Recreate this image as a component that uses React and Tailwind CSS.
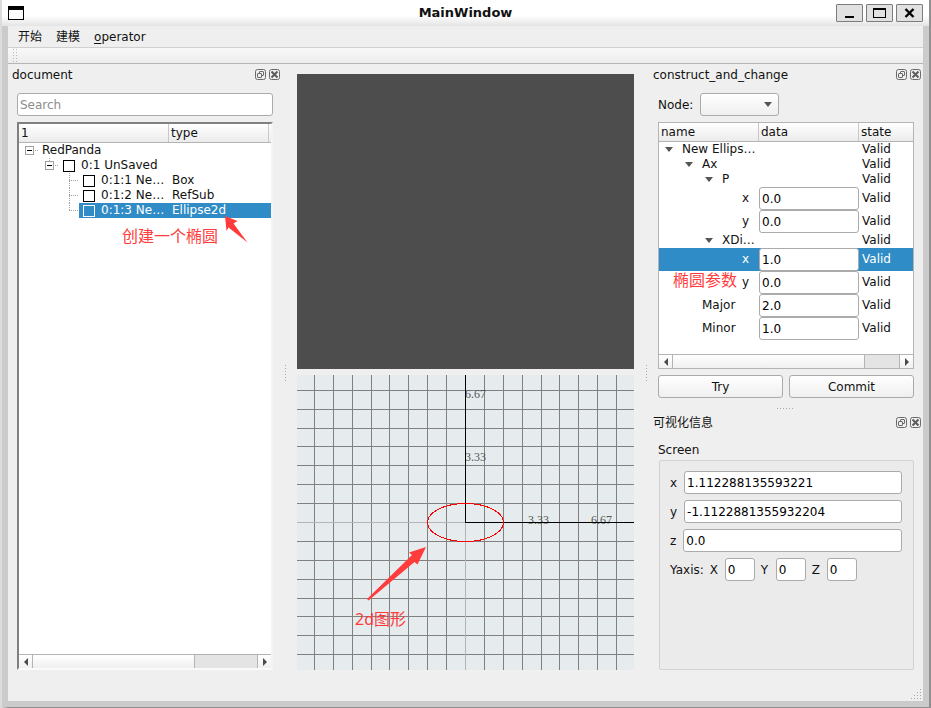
import React, { useState } from "react";

function Stipple({ vertical, className }) {
  return (
    <svg
      className={"shrink-0 " + (className || "")}
      width={vertical ? 2 : 17}
      height={vertical ? 17 : 2}
      shapeRendering="crispEdges"
      aria-hidden="true"
    >
      {[0, 3, 6, 9, 12, 15].map((p) => (
        <rect key={p} x={vertical ? 0 : p} y={vertical ? p : 0} width="1" height="1" fill="#a8a8a8" />
      ))}
    </svg>
  );
}

function DockTitle({ children }) {
  return (
    <div className="flex h-[21px] shrink-0 items-center gap-[3px] pl-1">
      <h2 className="flex-1">{children}</h2>
      <button type="button" aria-label="Float" className="size-[11px]">
        <svg width="11" height="11" viewBox="0 0 11 11" fill="none" stroke="#6a6a68">
          <rect x="0.5" y="0.5" width="10" height="10" rx="2" />
          <rect x="4.5" y="2.5" width="4" height="4" rx="0.5" />
          <rect x="2.5" y="4.5" width="4" height="4" rx="0.5" fill="#efefef" />
        </svg>
      </button>
      <button type="button" aria-label="Close" className="size-[11px]">
        <svg width="11" height="11" viewBox="0 0 11 11" fill="none" stroke="#6a6a68">
          <rect x="0.5" y="0.5" width="10" height="10" rx="2" />
          <path d="M2.500 2.500l6 6M8.500 2.500l-6 6" strokeWidth="2" stroke="#5c5c5a" />
        </svg>
      </button>
    </div>
  );
}

function ScrollBar({ thumb }) {
  return (
    <div className="flex h-[14px] shrink-0 border-t border-[#b4b4b4] bg-[#e4e4e4]">
      <button type="button" aria-label="Scroll left" className="flex w-[14px] items-center justify-center border-r border-[#b4b4b4] bg-linear-to-b from-white to-[#f0f0f0]">
        <svg width="4" height="8"><path d="M4 0v8L0 4z" fill="#4a4a4a" /></svg>
      </button>
      <div className={thumb + " border-r border-[#b4b4b4] bg-linear-to-b from-white to-[#f0f0f0]"} />
      <div className="flex-1" />
      <button type="button" aria-label="Scroll right" className="flex w-[14px] items-center justify-center border-l border-[#b4b4b4] bg-linear-to-b from-white to-[#f0f0f0]">
        <svg width="4" height="8"><path d="M0 0v8L4 4z" fill="#4a4a4a" /></svg>
      </button>
    </div>
  );
}

function HeaderCell({ children, divider }) {
  return (
    <th className="p-0 text-left font-normal">
      <div className="h-[19px] border-b border-[#b4b4b4] bg-linear-to-b from-white to-[#ebebeb]">
        <div className={"h-[18px] pl-[2px] leading-[18px] " + (divider || "")}>{children}</div>
      </div>
    </th>
  );
}

function Field({ id, label, initial, className }) {
  const [value, setValue] = useState(initial);
  return (
    <input
      id={id}
      aria-label={label}
      value={value}
      onChange={(e) => setValue(e.target.value)}
      className={"h-[23px] min-w-0 rounded-[3px] border border-[#ababab] bg-white px-[2px] text-black outline-none " + className}
    />
  );
}

function Expander({ stub }) {
  return (
    <svg className="shrink-0" width="16" height="15" shapeRendering="crispEdges" aria-hidden="true">
      {stub && <path d="M4.5 0v4" stroke="#a0a0a0" strokeDasharray="1 1" />}
      <rect x="0.5" y="3.5" width="8" height="8" fill="#fff" stroke="#a0a0a0" />
      <path d="M2 7.5h5" stroke="#000" />
      <path d="M10 7.5h4" stroke="#a0a0a0" strokeDasharray="1 1" />
    </svg>
  );
}

function Branch({ last }) {
  return (
    <svg className="shrink-0" width="10" height="15" shapeRendering="crispEdges" aria-hidden="true">
      <path d={last ? "M0.5 0v8M0 7.5h10" : "M0.5 0v15M0 7.5h10"} fill="none" stroke="#a0a0a0" strokeDasharray="1 1" />
    </svg>
  );
}

function Tick({ label, light }) {
  return (
    <input
      type="checkbox"
      aria-label={label}
      className={"size-3 shrink-0 appearance-none border " + (light ? "border-white" : "border-black")}
    />
  );
}

const CHILDREN = [
  { name: "0:1:1 Ne…", type: "Box" },
  { name: "0:1:2 Ne…", type: "RefSub" },
  { name: "0:1:3 Ne…", type: "Ellipse2d", selected: true },
];

function DocumentDock() {
  return (
    <section className="relative flex w-[277px] shrink-0 flex-col pr-[5px]">
      <DockTitle>document</DockTitle>
      <div className="flex flex-1 flex-col gap-[6px] pt-2 pr-[7px] pb-[31px] pl-[9px]">
        <input
          type="search"
          aria-label="Search"
          placeholder="Search"
          className="h-[23px] w-full rounded-[3px] border border-[#ababab] bg-white px-[2px] outline-none placeholder:text-[#8c8c8c]"
        />
        <div className="flex flex-1 flex-col border-2 border-t-[#808080] border-r-[#f4f4f4] border-b-[#fafafa] border-l-[#808080] bg-white">
          <table className="w-full table-fixed border-separate border-spacing-0">
            <colgroup>
              <col className="w-[150px]" />
              <col />
            </colgroup>
            <thead>
              <tr>
                <HeaderCell divider="border-r border-[#c8c8c8]">1</HeaderCell>
                <HeaderCell divider="mr-[2px] border-r border-[#c8c8c8]">type</HeaderCell>
              </tr>
            </thead>
            <tbody className="leading-[15px]">
              <tr>
                <td className="p-0"><div className="flex h-[15px] pl-[6px]"><Expander /><span className="pl-px">RedPanda</span></div></td>
                <td className="p-0" />
              </tr>
              <tr>
                <td className="p-0">
                  <div className="flex h-[15px] items-center pl-[26px]">
                    <Expander stub />
                    <span className="flex items-center gap-[6px] pl-[2px]"><Tick label="0:1 UnSaved" />0:1 UnSaved</span>
                  </div>
                </td>
                <td className="p-0" />
              </tr>
              {CHILDREN.map((c, i) => (
                <tr key={c.name}>
                  <td className="p-0">
                    <div className="flex h-[15px] pl-[50px]">
                      <Branch last={i === 2} />
                      <span className={"flex flex-1 items-center gap-[6px] pl-1 " + (c.selected ? "bg-[#308cc6] text-white" : "")}>
                        <Tick label={c.name} light={c.selected} />
                        {c.name}
                      </span>
                    </div>
                  </td>
                  <td className={"p-0 pl-[3px] " + (c.selected ? "bg-[#308cc6] text-white" : "")}>{c.type}</td>
                </tr>
              ))}
            </tbody>
          </table>
          <div className="flex-1" />
          <ScrollBar thumb="w-[162px]" />
        </div>
      </div>
      <div className="pointer-events-none absolute top-[152px] left-[114px] text-base text-[#ff3b3b]">
        <span className="block leading-[42px]">创建一个椭圆</span>
        <svg className="absolute top-0 left-[103px]" width="24" height="28" aria-hidden="true">
          <path d="M0 0l12.500 5-4 2.500L22.500 26.500 3.500 11.500 1.500 15z" fill="#ff3b3b" />
        </svg>
      </div>
    </section>
  );
}

const GRID_X = [17, 36, 55, 74, 92, 111, 130, 149, 187, 206, 225, 244, 262, 281, 300, 319];
const GRID_Y = [15, 34, 53, 71, 90, 109, 128, 166, 185, 204, 223, 241, 260, 279];

function Views() {
  return (
    <main className="flex min-w-0 flex-1 items-center pb-[18px]">
      <Stipple vertical />
      <div className="flex min-w-0 flex-1 flex-col gap-[6px] self-stretch pt-[10px] pr-3 pb-[13px] pl-[10px]">
        <div className="flex-1 bg-[#4d4d4d]" />
        <svg className="w-full flex-1 bg-[#e6ecee]" viewBox="0 0 337 295" preserveAspectRatio="xMidYMid slice" role="img" aria-label="2D view">
          <rect width="337" height="295" fill="#e6ecee" />
          <g shapeRendering="crispEdges" fill="#808080">
            {GRID_X.map((x) => <rect key={x} x={x} width="1" height="295" />)}
            {GRID_Y.map((y) => <rect key={y} y={y} width="337" height="1" />)}
            <rect y="147" width="168" height="1" fill="#b4b4b4" />
            <rect x="168" y="147" width="1" height="148" fill="#b4b4b4" />
          </g>
          <g fontFamily="'Liberation Serif', serif" fontSize="12" fill="#555">
            <text x="168" y="23">6.67</text>
            <text x="168" y="86">3.33</text>
            <text x="231" y="149">3.33</text>
            <text x="294" y="149">6.67</text>
          </g>
          <g shapeRendering="crispEdges">
            <rect x="168" width="1" height="148" fill="#000" />
            <rect x="168" y="147" width="169" height="1" fill="#000" />
            <ellipse cx="168.500" cy="147.500" rx="38" ry="19" fill="none" stroke="#f00" />
          </g>
          <path d="M129 172l-17 5.500 3 2.500-45 44 1.500 1.500 46-38.500 3 2.500z" fill="#ff3b3b" />
          <text x="58" y="250" fontSize="16" fill="#ff3b3b" fontFamily="'Noto Sans', 'Noto Sans CJK SC', sans-serif">2d图形</text>
        </svg>
      </div>
      <Stipple vertical className="mr-px" />
    </main>
  );
}

const PROPERTIES = [
  { name: "New Ellips…", indent: "pl-[6px]", open: true },
  { name: "Ax", indent: "pl-[26px]", open: true },
  { name: "P", indent: "pl-[46px]", open: true },
  { name: "x", indent: "pl-[83px]", value: "0.0" },
  { name: "y", indent: "pl-[83px]", value: "0.0" },
  { name: "XDi…", indent: "pl-[46px]", open: true },
  { name: "x", indent: "pl-[83px]", value: "1.0", selected: true },
  { name: "y", indent: "pl-[83px]", value: "0.0" },
  { name: "Major", indent: "pl-[43px]", value: "2.0" },
  { name: "Minor", indent: "pl-[43px]", value: "1.0" },
];

function ConstructDock() {
  return (
    <section className="relative flex flex-col">
      <DockTitle>construct_and_change</DockTitle>
      <div className="flex flex-col gap-[6px] pt-2 pr-[7px] pl-[9px]">
        <div className="flex items-center gap-[7px]">
          <label htmlFor="node">Node:</label>
          <div className="relative">
            <select id="node" className="block h-[23px] w-[79px] appearance-none rounded-[3px] border border-[#ababab] bg-linear-to-b from-white to-[#efefef]">
              <option value=""></option>
            </select>
            <svg className="pointer-events-none absolute top-[9px] right-[7px]" width="8" height="5"><path d="M0 0h8L4 5z" fill="#555" /></svg>
          </div>
        </div>
        <div className="flex h-[247px] flex-col border border-[#b4b4b4] bg-white">
          <table className="w-full table-fixed border-separate border-spacing-0">
            <colgroup>
              <col className="w-[100px]" />
              <col className="w-[100px]" />
              <col />
            </colgroup>
            <thead>
              <tr>
                <HeaderCell divider="border-r border-[#c8c8c8]">name</HeaderCell>
                <HeaderCell divider="border-r border-[#c8c8c8]">data</HeaderCell>
                <HeaderCell>state</HeaderCell>
              </tr>
            </thead>
            <tbody className="leading-[15px]">
              {PROPERTIES.map((p, i) => (
                <tr key={i} className={p.selected ? "bg-[#308cc6] text-white" : ""}>
                  <td className="p-0">
                    <div className={"flex items-center gap-[9px] " + p.indent}>
                      {p.open && <svg className="shrink-0" width="8" height="5"><path d="M0 0h8L4 5z" fill="#555" /></svg>}
                      <span className="whitespace-nowrap">{p.name}</span>
                    </div>
                  </td>
                  <td className="p-0">
                    {p.value && <Field label={p.name} initial={p.value} className="block w-full" />}
                  </td>
                  <td className="p-0 pl-[3px]">Valid</td>
                </tr>
              ))}
            </tbody>
          </table>
          <div className="flex-1" />
          <ScrollBar thumb="w-[192px]" />
        </div>
        <div className="flex gap-[6px]">
          {["Try", "Commit"].map((t) => (
            <button key={t} type="button" className="h-[23px] flex-1 rounded-[3px] border border-[#ababab] bg-linear-to-b from-white to-[#efefef]">
              {t}
            </button>
          ))}
        </div>
      </div>
      <span className="pointer-events-none absolute top-[205px] left-[24px] text-base text-[#ff3b3b]">椭圆参数</span>
    </section>
  );
}

function VisualDock() {
  return (
    <section className="flex flex-1 flex-col">
      <DockTitle>可视化信息</DockTitle>
      <div className="flex flex-1 flex-col gap-px pt-2 pr-[7px] pb-[31px] pl-[9px]">
        <h3 className="leading-[18px]">Screen</h3>
        <div className="ml-px flex flex-1 flex-col gap-[6px] rounded-[2px] border border-[#d2d2d2] bg-[#ebebeb] py-[10px] pr-[11px] pl-[10px]">
          {[["x", "1.112288135593221"], ["y", "-1.1122881355932204"], ["z", "0.0"]].map(([n, v]) => (
            <div key={n} className="flex items-center gap-[7px]">
              <label htmlFor={"screen-" + n}>{n}</label>
              <Field id={"screen-" + n} label={n} initial={v} className="flex-1" />
            </div>
          ))}
          <div className="flex items-center gap-[6px]">
            <span>Yaxis:</span>
            {["X", "Y", "Z"].map((n) => (
              <React.Fragment key={n}>
                <label htmlFor={"axis-" + n} className="w-[9px]">{n}</label>
                <Field id={"axis-" + n} label={n} initial="0" className="w-[30px]" />
              </React.Fragment>
            ))}
          </div>
        </div>
      </div>
    </section>
  );
}

function TitleBar() {
  const box = "flex h-[18px] w-[27px] items-center justify-center rounded-[1px] border border-[#7c7c7c] bg-[#e1e1e1]";
  return (
    <header className="relative flex h-[26px] shrink-0 items-center justify-end gap-[3px] bg-linear-to-b from-white from-60% to-[#e4e4e4] pr-[6px]">
      <svg className="mr-auto ml-[6px]" width="16" height="14" shapeRendering="crispEdges" aria-hidden="true">
        <rect width="16" height="14" />
        <rect x="1" y="4" width="14" height="9" fill="#fff" />
      </svg>
      <h1 className="pointer-events-none absolute inset-0 text-center text-[13px] leading-[26px] font-bold">MainWindow</h1>
      <button type="button" aria-label="Minimize" className={box}>
        <svg width="13" height="11" shapeRendering="crispEdges"><rect x="2" y="8" width="9" height="2" /></svg>
      </button>
      <button type="button" aria-label="Maximize" className={box}>
        <svg width="13" height="10" shapeRendering="crispEdges"><path d="M0 0h13v10H0zM1 2v7h11V2z" fillRule="evenodd" /></svg>
      </button>
      <button type="button" aria-label="Close" className={box}>
        <svg width="11" height="10"><path d="M1.500 1l8 8M9.500 1l-8 8" stroke="#000" strokeWidth="2.400" /></svg>
      </button>
    </header>
  );
}

export default function App() {
  return (
    <div className="flex min-h-screen bg-[#8f8f8f] bg-linear-to-r from-[#dcdcdc] from-[2px] to-[#8f8f8f] to-[8px] pr-[2px] pb-px pl-[2px] font-['DejaVu_Sans','Noto_Sans_CJK_SC',sans-serif] text-xs text-[#111]">
      <div className="flex min-w-0 flex-1 flex-col bg-[#cbcbcb]">
        <TitleBar />
        <div className="mx-[6px] mb-[6px] flex flex-1 flex-col bg-[#efefef]">
          <nav className="flex h-[22px] shrink-0 items-center gap-[14px] border-b border-[#cfcfcf] pl-[10px]">
            <button type="button">开始</button>
            <button type="button">建模</button>
            <button type="button"><span className="underline underline-offset-2">o</span>perator</button>
          </nav>
          <div className="h-4 shrink-0 border-b border-[#b4b4b4] bg-linear-to-b from-[#f8f8f8] to-[#ededed] pl-[5px]">
            <svg width="5" height="15" shapeRendering="crispEdges" aria-hidden="true">
              {[1, 4, 7, 10, 13].map((y) => (
                <g key={y} fill="#b8b8b8">
                  <rect y={y} width="1" height="1" />
                  <rect x="3" y={y} width="1" height="1" />
                </g>
              ))}
            </svg>
          </div>
          <div className="relative flex flex-1">
            <DocumentDock />
            <Views />
            <aside className="flex w-[274px] shrink-0 flex-col pr-[2px]">
              <ConstructDock />
              <Stipple className="mt-[10px] mb-[2px] self-center" />
              <VisualDock />
            </aside>
            <svg className="absolute right-[2px] bottom-[2px]" width="10" height="10" shapeRendering="crispEdges" aria-hidden="true">
              {[0, 3, 6, 9].map((y) =>
                [0, 3, 6, 9].filter((x) => x + y >= 9).map((x) => <rect key={x + "-" + y} x={x} y={y} width="1" height="1" fill="#a8a8a8" />)
              )}
            </svg>
          </div>
        </div>
      </div>
    </div>
  );
}
